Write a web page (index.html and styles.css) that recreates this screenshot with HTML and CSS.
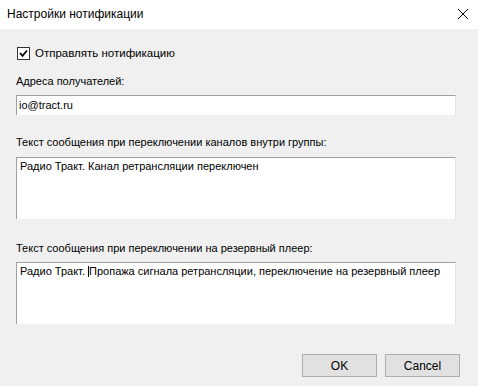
FILE: index.html
```html
<!DOCTYPE html>
<html lang="ru">
<head>
    <meta charset="UTF-8">
    <title>Настройки нотификации</title>
    <link rel="stylesheet" href="styles.css">
</head>
<body>
    <div class="window">
        <div class="titlebar">
            <span class="title">Настройки нотификации</span>
            <button type="button" class="close-btn" aria-label="Закрыть">
                <svg width="10" height="10" viewBox="0 0 10 10" fill="none" stroke="#000" stroke-width="1"><line x1="0" y1="0" x2="10" y2="10"/><line x1="10" y1="0" x2="0" y2="10"/></svg>
            </button>
        </div>
        <div class="content">
            <label class="check-row">
                <span class="checkbox">
                    <svg width="11" height="11" viewBox="0 0 11 11" fill="none" stroke="#000" stroke-width="1.8"><polyline points="2,5 4.5,7.8 9,2.5"/></svg>
                </span>
                <span>Отправлять нотификацию</span>
            </label>

            <div class="field-label first">Адреса получателей:</div>
            <div class="text-input">io@tract.ru</div>

            <div class="field-label">Текст сообщения при переключении каналов внутри группы:</div>
            <div class="text-area">Радио Тракт. Канал ретрансляции переключен</div>

            <div class="field-label">Текст сообщения при переключении на резервный плеер:</div>
            <div class="text-area">Радио Тракт. <span class="caret"></span>Пропажа сигнала ретрансляции, переключение на резервный плеер</div>

            <div class="buttons">
                <button type="button" class="btn">OK</button>
                <button type="button" class="btn">Cancel</button>
            </div>
        </div>
    </div>
</body>
</html>
```

FILE: styles.css
```css
html, body {
    margin: 0;
    padding: 0;
    width: 478px;
    height: 386px;
    overflow: hidden;
    font-family: 'Liberation Sans', Arial, sans-serif;
    font-size: 11px;
    color: #000;
    background: #f0f0f0;
}
.window {
    width: 478px;
    height: 386px;
    display: flex;
    flex-direction: column;
}
.titlebar {
    height: 29px;
    background: #fff;
    display: flex;
    align-items: center;
    justify-content: space-between;
    padding: 0 10px 0 7px;
}
.title {
    font-family: 'Liberation Sans', Arial, sans-serif;
    font-size: 12px;
    margin-top: -1px;
}
.close-btn {
    background: none;
    border: none;
    padding: 0;
    width: 10px;
    height: 10px;
    display: flex;
    margin-top: -1px;
}
.content {
    padding: 18px 22px 0 16px;
    display: flex;
    flex-direction: column;
}
.check-row {
    display: flex;
    align-items: center;
    height: 13px;
    padding-left: 1px;
    gap: 5px;
    line-height: 13px;
    font-size: 11.5px;
}
.checkbox {
    width: 11px;
    height: 11px;
    border: 1px solid #333;
    background: #fff;
    display: flex;
    align-items: center;
    justify-content: center;
}
.field-label {
    height: 13px;
    line-height: 13px;
    margin-top: 21px;
    margin-bottom: 8px;
}
.field-label.first {
    margin-top: 15px;
    margin-bottom: 7px;
}
.text-input {
    height: 19px;
    line-height: 18px;
    background: #fff;
    border-top: 1px solid #a0a0a0;
    border-left: 1px solid #a0a0a0;
    border-right: 1px solid #e3e3e3;
    padding-left: 2px;
    white-space: nowrap;
}
.text-area {
    height: 59px;
    line-height: 13px;
    background: #fff;
    border-top: 1px solid #a0a0a0;
    border-left: 1px solid #a0a0a0;
    border-right: 1px solid #e3e3e3;
    padding: 2px 0 0 3px;
    white-space: nowrap;
}
.text-area + .field-label {
    margin-top: 23px;
    margin-bottom: 7px;
}
.caret {
    display: inline-block;
    width: 1px;
    height: 11px;
    background: #000;
    vertical-align: -2px;
}
.buttons {
    display: flex;
    justify-content: flex-end;
    gap: 8px;
    margin-top: 30px;
    margin-right: -4px;
}
.btn {
    width: 75px;
    height: 23px;
    background: #e1e1e1;
    border: 1px solid #adadad;
    font-family: 'Liberation Sans', Arial, sans-serif;
    font-size: 12px;
    color: #000;
    padding: 0;
}
```
